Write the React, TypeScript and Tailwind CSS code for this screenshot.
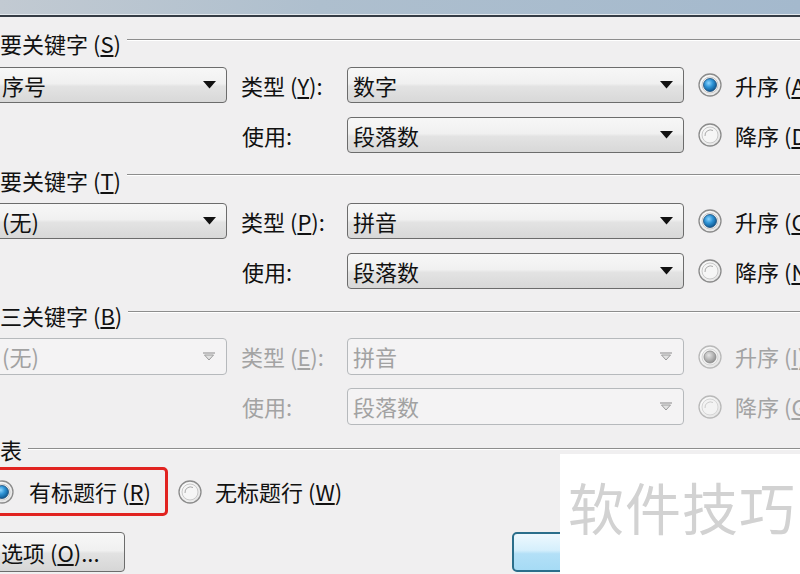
import type { ReactNode } from "react";

type RadioKind = "on" | "off" | "dis-on" | "dis-off";

function Radio({ kind, className = "" }: { kind: RadioKind; className?: string }) {
  const dis = kind === "dis-on" || kind === "dis-off";
  return (
    <svg width="24" height="24" viewBox="0 0 24 24" className={`shrink-0 ${className}`}>
      <defs>
        <linearGradient id="rg-ring" x1="0" y1="0" x2="1" y2="1">
          <stop offset="0" stopColor="#ffffff" />
          <stop offset="1" stopColor="#e2e2e2" />
        </linearGradient>
        <radialGradient id="rg-blue" cx="0.4" cy="0.35" r="0.7">
          <stop offset="0" stopColor="#8fd6ff" />
          <stop offset="0.45" stopColor="#2f94d6" />
          <stop offset="1" stopColor="#0b4f86" />
        </radialGradient>
        <radialGradient id="rg-gray" cx="0.4" cy="0.35" r="0.7">
          <stop offset="0" stopColor="#e4e4e4" />
          <stop offset="1" stopColor="#8c8c8c" />
        </radialGradient>
      </defs>
      <circle cx="12" cy="12" r="11" fill="url(#rg-ring)" stroke={dis ? "#b9b9b9" : "#8b8b8b"} strokeWidth="1.3" />
      <circle cx="12" cy="12" r="8" fill={dis ? "#f3f3f3" : "#f6f6f6"} stroke={dis ? "#d6d6d6" : "#c9c9c9"} strokeWidth="1" />
      {kind === "on" && <circle cx="12" cy="12" r="6.5" fill="url(#rg-blue)" stroke="#1d4d78" strokeWidth="0.8" />}
      {kind === "dis-on" && <circle cx="12" cy="12" r="6" fill="url(#rg-gray)" stroke="#8a8a8a" strokeWidth="0.8" />}
      {(kind === "off" || kind === "dis-off") && (
        <path d="M7 13 A5.5 5.5 0 0 1 15 7.5" fill="none" stroke={dis ? "#cccccc" : "#a9a9a9"} strokeWidth="1" />
      )}
    </svg>
  );
}

function Combo({
  text,
  className = "",
  disabled = false,
}: {
  text: string;
  className?: string;
  disabled?: boolean;
}) {
  return (
    <div
      className={`flex h-[36px] shrink-0 items-center justify-between rounded-[4px] border pr-[10px] ${
        disabled
          ? "border-[#b6b9bc] bg-[#f4f3f4] text-[#a2a2a2]"
          : "border-[#6c6c6c] bg-[linear-gradient(#f7f7f7_0%,#f0f0f0_46%,#e3e3e3_54%,#d8d8d8_100%)] text-[#111]"
      } ${className}`}
    >
      <span className="whitespace-nowrap">{text}</span>
      {disabled ? (
        <svg width="14" height="9" viewBox="0 0 14 9">
          <line x1="1" y1="1" x2="13" y2="1" stroke="#9a9a9a" strokeWidth="1.2" />
          <polygon points="2.5,3 11.5,3 7,8" fill="#e2e2e2" stroke="#9a9a9a" strokeWidth="1" />
        </svg>
      ) : (
        <svg width="13" height="8" viewBox="0 0 13 8">
          <polygon points="0,0 13,0 6.5,7.5" fill="#111" />
        </svg>
      )}
    </div>
  );
}

function Header({
  children,
  className = "",
  lineTop = "mt-[8px]",
}: {
  children: ReactNode;
  className?: string;
  lineTop?: string;
}) {
  return (
    <div className={`flex h-[24px] ${className}`}>
      <span className="whitespace-nowrap leading-[24px]">{children}</span>
      <div className={`ml-[6px] h-[2px] flex-1 border-t border-b border-t-[#8d8d8d] border-b-white ${lineTop}`} />
    </div>
  );
}

function Key({ k }: { k: string }) {
  return (
    <>
      {" "}(<span className="underline underline-offset-2">{k}</span>)
    </>
  );
}

export default function App() {
  return (
    <div className="relative h-[574px] w-[800px] overflow-hidden bg-[#f0eff0] font-['Noto_Sans_CJK_SC','Noto_Sans',sans-serif] text-[22px] text-[#111]">
      {/* title bar */}
      <div className="h-[14px] bg-[linear-gradient(90deg,#c2cad2_0%,#aebfce_40%,#a4b9cd_100%)]" />
      <div className="h-px bg-[#e3e9ee]" />
      <div className="h-[2px] bg-[#353c45]" />

      <Header className="mt-[14px]">
        要关键字<Key k="S" />
      </Header>
      <div className="mt-[12px] flex h-[36px] items-center">
        <Combo className="-ml-[13px] w-[240px] pl-[14px]" text="序号" />
        <span className="ml-[14px] w-[106px] shrink-0 whitespace-nowrap">
          类型<Key k="Y" />:
        </span>
        <Combo className="w-[337px] pl-[5px]" text="数字" />
        <Radio kind="on" className="ml-[14px]" />
        <span className="ml-[13px] shrink-0 whitespace-nowrap">
          升序<Key k="A" />
        </span>
      </div>
      <div className="mt-[14px] flex h-[36px] items-center">
        <div className="w-[227px] shrink-0" />
        <span className="ml-[15px] w-[105px] shrink-0 whitespace-nowrap">使用:</span>
        <Combo className="w-[337px] pl-[5px]" text="段落数" />
        <Radio kind="off" className="ml-[14px]" />
        <span className="ml-[13px] shrink-0 whitespace-nowrap">
          降序<Key k="D" />
        </span>
      </div>

      <Header className="mt-[15px]" lineTop="mt-[6px]">
        要关键字<Key k="T" />
      </Header>
      <div className="mt-[11px] flex h-[36px] items-center">
        <Combo className="-ml-[13px] w-[240px] pl-[14px]" text="(无)" />
        <span className="ml-[14px] w-[106px] shrink-0 whitespace-nowrap">
          类型<Key k="P" />:
        </span>
        <Combo className="w-[337px] pl-[5px]" text="拼音" />
        <Radio kind="on" className="ml-[14px]" />
        <span className="ml-[13px] shrink-0 whitespace-nowrap">
          升序<Key k="C" />
        </span>
      </div>
      <div className="mt-[14px] flex h-[36px] items-center">
        <div className="w-[227px] shrink-0" />
        <span className="ml-[15px] w-[105px] shrink-0 whitespace-nowrap">使用:</span>
        <Combo className="w-[337px] pl-[5px]" text="段落数" />
        <Radio kind="off" className="ml-[14px]" />
        <span className="ml-[13px] shrink-0 whitespace-nowrap">
          降序<Key k="N" />
        </span>
      </div>

      <Header className="mt-[14px]">
        三关键字<Key k="B" />
      </Header>
      <div className="mt-[11px] flex h-[37px] items-center text-[#a3a3a3]">
        <Combo disabled className="-ml-[13px] h-[37px] w-[240px] pl-[14px]" text="(无)" />
        <span className="ml-[14px] w-[106px] shrink-0 whitespace-nowrap">
          类型<Key k="E" />:
        </span>
        <Combo disabled className="h-[37px] w-[337px] pl-[5px]" text="拼音" />
        <Radio kind="dis-on" className="ml-[14px]" />
        <span className="ml-[13px] shrink-0 whitespace-nowrap">
          升序<Key k="I" />
        </span>
      </div>
      <div className="mt-[13px] flex h-[37px] items-center text-[#a3a3a3]">
        <div className="w-[227px] shrink-0" />
        <span className="ml-[15px] w-[105px] shrink-0 whitespace-nowrap">使用:</span>
        <Combo disabled className="h-[37px] w-[337px] pl-[5px]" text="段落数" />
        <Radio kind="dis-off" className="ml-[14px]" />
        <span className="ml-[13px] shrink-0 whitespace-nowrap">
          降序<Key k="G" />
        </span>
      </div>

      <Header className="mt-[12px]" lineTop="mt-[11px]">
        表
      </Header>
      <div className="mt-[6px] flex h-[49px] items-center">
        <div className="-ml-[20px] flex h-[49px] w-[188px] shrink-0 items-center rounded-[5px] border-[3px] border-[#e12320] pl-[7px]">
          <Radio kind="on" />
          <span className="ml-[15px] whitespace-nowrap">
            有标题行<Key k="R" />
          </span>
        </div>
        <Radio kind="off" className="ml-[10px]" />
        <span className="ml-[13px] shrink-0 whitespace-nowrap">
          无标题行<Key k="W" />
        </span>
      </div>

      <div className="mt-[16px] flex h-[40px] items-center">
        <div className="-ml-[40px] flex h-[40px] w-[165px] shrink-0 items-center whitespace-nowrap rounded-[4px] border border-[#6c6c6c] bg-[linear-gradient(#f7f7f7_0%,#f0f0f0_46%,#e2e2e2_54%,#d6d6d6_100%)] pl-[40px]">
          选项<Key k="O" />...
        </div>
        <div className="ml-[387px] h-[40px] w-[110px] shrink-0 rounded-[5px] border-2 border-[#2a6e8b] bg-[linear-gradient(#eef8fe_0%,#d5effc_45%,#b3e0f7_55%,#a6dbf5_100%)]" />
      </div>

      {/* watermark */}
      <div className="absolute left-[560px] top-[454px] flex h-[120px] w-[240px] items-start bg-white pl-[8px] pt-[22px]">
        <span className="whitespace-nowrap text-[56px] leading-[60px] tracking-[1px] text-[#d2d2d2]">软件技巧</span>
      </div>
    </div>
  );
}
